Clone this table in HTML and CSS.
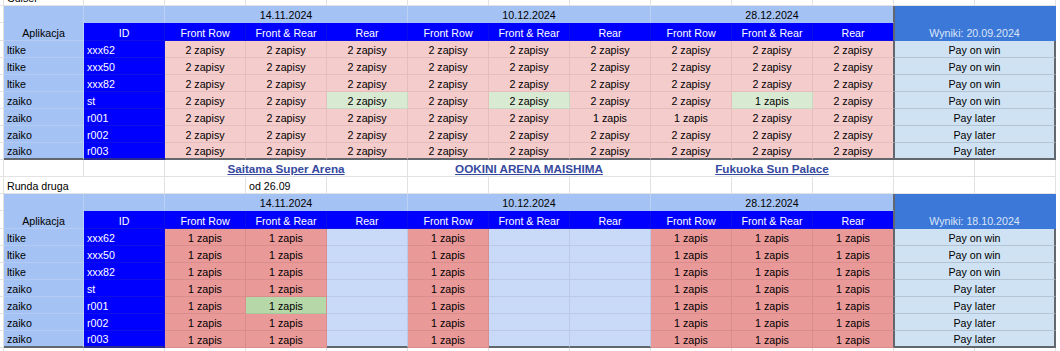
FILE: index.html
```html
<!DOCTYPE html>
<html lang="pl">
<head>
<meta charset="utf-8">
<title>Arkusz</title>
<link rel="stylesheet" href="styles.css">
</head>
<body>
<div class="sheet">
  <!-- row 0 -->
  <div class="c z"></div><div class="c l">Cuisel</div><div class="c"></div><div class="c"></div><div class="c"></div><div class="c"></div><div class="c"></div><div class="c"></div><div class="c"></div><div class="c"></div><div class="c"></div><div class="c"></div><div class="c"></div><div class="c"></div>

  <!-- table 1 header -->
  <div class="c z"></div><div class="c app r2">Aplikacja</div><div class="c hl"></div><div class="c hl s3">14.11.2024</div><div class="c hl s3">10.12.2024</div><div class="c hl s3 kr">28.12.2024</div><div class="c wy s2 r2">Wyniki: 20.09.2024</div>
  <div class="c z"></div><div class="c hb">ID</div><div class="c hb">Front Row</div><div class="c hb">Front &amp; Rear</div><div class="c hb">Rear</div><div class="c hb">Front Row</div><div class="c hb">Front &amp; Rear</div><div class="c hb">Rear</div><div class="c hb">Front Row</div><div class="c hb">Front &amp; Rear</div><div class="c hb kr">Rear</div>

  <!-- table 1 data -->
  <div class="c z"></div><div class="c l app">ltike</div><div class="c l idc">xxx62</div><div class="c pk">2 zapisy</div><div class="c pk">2 zapisy</div><div class="c pk">2 zapisy</div><div class="c pk">2 zapisy</div><div class="c pk">2 zapisy</div><div class="c pk">2 zapisy</div><div class="c pk">2 zapisy</div><div class="c pk">2 zapisy</div><div class="c pk kr">2 zapisy</div><div class="c res s2">Pay on win</div>
  <div class="c z"></div><div class="c l app">ltike</div><div class="c l idc">xxx50</div><div class="c pk">2 zapisy</div><div class="c pk">2 zapisy</div><div class="c pk">2 zapisy</div><div class="c pk">2 zapisy</div><div class="c pk">2 zapisy</div><div class="c pk">2 zapisy</div><div class="c pk">2 zapisy</div><div class="c pk">2 zapisy</div><div class="c pk kr">2 zapisy</div><div class="c res s2">Pay on win</div>
  <div class="c z"></div><div class="c l app">ltike</div><div class="c l idc">xxx82</div><div class="c pk">2 zapisy</div><div class="c pk">2 zapisy</div><div class="c pk">2 zapisy</div><div class="c pk">2 zapisy</div><div class="c pk">2 zapisy</div><div class="c pk">2 zapisy</div><div class="c pk">2 zapisy</div><div class="c pk">2 zapisy</div><div class="c pk kr">2 zapisy</div><div class="c res s2">Pay on win</div>
  <div class="c z"></div><div class="c l app">zaiko</div><div class="c l idc">st</div><div class="c pk">2 zapisy</div><div class="c pk">2 zapisy</div><div class="c gr">2 zapisy</div><div class="c pk">2 zapisy</div><div class="c gr">2 zapisy</div><div class="c pk">2 zapisy</div><div class="c pk">2 zapisy</div><div class="c gr">1 zapis</div><div class="c pk kr">2 zapisy</div><div class="c res s2">Pay on win</div>
  <div class="c z"></div><div class="c l app">zaiko</div><div class="c l idc">r001</div><div class="c pk">2 zapisy</div><div class="c pk">2 zapisy</div><div class="c pk">2 zapisy</div><div class="c pk">2 zapisy</div><div class="c pk">2 zapisy</div><div class="c pk">1 zapis</div><div class="c pk">1 zapis</div><div class="c pk">2 zapisy</div><div class="c pk kr">2 zapisy</div><div class="c res s2">Pay later</div>
  <div class="c z"></div><div class="c l app">zaiko</div><div class="c l idc">r002</div><div class="c pk">2 zapisy</div><div class="c pk">2 zapisy</div><div class="c pk">2 zapisy</div><div class="c pk">2 zapisy</div><div class="c pk">2 zapisy</div><div class="c pk">2 zapisy</div><div class="c pk">2 zapisy</div><div class="c pk">2 zapisy</div><div class="c pk kr">2 zapisy</div><div class="c res s2">Pay later</div>
  <div class="c z"></div><div class="c l app bt">zaiko</div><div class="c l idc bt">r003</div><div class="c pk bt">2 zapisy</div><div class="c pk bt">2 zapisy</div><div class="c pk bt">2 zapisy</div><div class="c pk bt">2 zapisy</div><div class="c pk bt">2 zapisy</div><div class="c pk bt">2 zapisy</div><div class="c pk bt">2 zapisy</div><div class="c pk bt">2 zapisy</div><div class="c pk kr bt">2 zapisy</div><div class="c res s2 bt">Pay later</div>

  <!-- venues -->
  <div class="c z"></div><div class="c"></div><div class="c"></div><div class="c s3"><span class="lk">Saitama Super Arena</span></div><div class="c s3"><span class="lk">OOKINI ARENA MAISHIMA</span></div><div class="c s3"><span class="lk">Fukuoka Sun Palace</span></div><div class="c"></div><div class="c"></div>

  <!-- round two -->
  <div class="c z"></div><div class="c l s2">Runda druga</div><div class="c"></div><div class="c l">od 26.09</div><div class="c"></div><div class="c"></div><div class="c"></div><div class="c"></div><div class="c"></div><div class="c"></div><div class="c"></div><div class="c"></div><div class="c"></div>

  <!-- table 2 header -->
  <div class="c z"></div><div class="c app r2">Aplikacja</div><div class="c hl"></div><div class="c hl s3">14.11.2024</div><div class="c hl s3">10.12.2024</div><div class="c hl s3 kr">28.12.2024</div><div class="c wy s2 r2">Wyniki: 18.10.2024</div>
  <div class="c z"></div><div class="c hb">ID</div><div class="c hb">Front Row</div><div class="c hb">Front &amp; Rear</div><div class="c hb">Rear</div><div class="c hb">Front Row</div><div class="c hb">Front &amp; Rear</div><div class="c hb">Rear</div><div class="c hb">Front Row</div><div class="c hb">Front &amp; Rear</div><div class="c hb kr">Rear</div>

  <!-- table 2 data -->
  <div class="c z"></div><div class="c l app">ltike</div><div class="c l idc">xxx62</div><div class="c rd">1 zapis</div><div class="c rd">1 zapis</div><div class="c em"></div><div class="c rd">1 zapis</div><div class="c em"></div><div class="c em"></div><div class="c rd">1 zapis</div><div class="c rd">1 zapis</div><div class="c rd kr">1 zapis</div><div class="c res s2">Pay on win</div>
  <div class="c z"></div><div class="c l app">ltike</div><div class="c l idc">xxx50</div><div class="c rd">1 zapis</div><div class="c rd">1 zapis</div><div class="c em"></div><div class="c rd">1 zapis</div><div class="c em"></div><div class="c em"></div><div class="c rd">1 zapis</div><div class="c rd">1 zapis</div><div class="c rd kr">1 zapis</div><div class="c res s2">Pay on win</div>
  <div class="c z"></div><div class="c l app">ltike</div><div class="c l idc">xxx82</div><div class="c rd">1 zapis</div><div class="c rd">1 zapis</div><div class="c em"></div><div class="c rd">1 zapis</div><div class="c em"></div><div class="c em"></div><div class="c rd">1 zapis</div><div class="c rd">1 zapis</div><div class="c rd kr">1 zapis</div><div class="c res s2">Pay on win</div>
  <div class="c z"></div><div class="c l app">zaiko</div><div class="c l idc">st</div><div class="c rd">1 zapis</div><div class="c rd">1 zapis</div><div class="c em"></div><div class="c rd">1 zapis</div><div class="c em"></div><div class="c em"></div><div class="c rd">1 zapis</div><div class="c rd">1 zapis</div><div class="c rd kr">1 zapis</div><div class="c res s2">Pay later</div>
  <div class="c z"></div><div class="c l app">zaiko</div><div class="c l idc">r001</div><div class="c rd">1 zapis</div><div class="c gr2">1 zapis</div><div class="c em"></div><div class="c rd">1 zapis</div><div class="c em"></div><div class="c em"></div><div class="c rd">1 zapis</div><div class="c rd">1 zapis</div><div class="c rd kr">1 zapis</div><div class="c res s2">Pay later</div>
  <div class="c z"></div><div class="c l app">zaiko</div><div class="c l idc">r002</div><div class="c rd">1 zapis</div><div class="c rd">1 zapis</div><div class="c em"></div><div class="c rd">1 zapis</div><div class="c em"></div><div class="c em"></div><div class="c rd">1 zapis</div><div class="c rd">1 zapis</div><div class="c rd kr">1 zapis</div><div class="c res s2">Pay later</div>
  <div class="c z"></div><div class="c l app bt">zaiko</div><div class="c l idc bt">r003</div><div class="c rd">1 zapis</div><div class="c rd">1 zapis</div><div class="c em bt"></div><div class="c rd">1 zapis</div><div class="c em bt"></div><div class="c em bt"></div><div class="c rd">1 zapis</div><div class="c rd">1 zapis</div><div class="c rd kr">1 zapis</div><div class="c res s2 bt">Pay later</div>

  <!-- trailing empty row -->
  <div class="c z"></div><div class="c"></div><div class="c"></div><div class="c"></div><div class="c"></div><div class="c"></div><div class="c"></div><div class="c"></div><div class="c"></div><div class="c"></div><div class="c"></div><div class="c"></div><div class="c"></div><div class="c"></div>
</div>
</body>
</html>
```

FILE: styles.css
```css
html, body {
  margin: 0;
  padding: 0;
  background: #ffffff;
}

body {
  font-family: "Liberation Sans", Arial, sans-serif;
  font-size: 10.67px;
  color: #000000;
  overflow: hidden;
}

.sheet {
  display: grid;
  grid-template-columns: 4px 80px repeat(12, 81px);
  grid-template-rows:
    6px 17px 18px repeat(7, 17px)
    17px 17px
    17px 18px repeat(7, 17px)
    17px;
}

.c {
  box-sizing: border-box;
  min-width: 0;
  display: flex;
  align-items: flex-end;
  justify-content: center;
  padding: 0 3px;
  line-height: 14px;
  white-space: nowrap;
  overflow: hidden;
  background: #ffffff;
  border-right: 1px solid #e2e2e2;
  border-bottom: 1px solid #e2e2e2;
}

.c.l { justify-content: flex-start; }
.c.z { padding: 0; }

.s2 { grid-column: span 2; }
.s3 { grid-column: span 3; }
.r2 { grid-row: span 2; }

/* application column */
.app {
  background: #a4c2f4;
  border-right-color: #b9cff5;
  border-bottom-color: #b4cbf3;
}

/* light header row */
.hl {
  background: #a4c2f4;
  border-right-color: #bcd1f5;
  border-bottom-color: #a4c2f4;
}

/* blue id column and blue header row */
.idc, .hb {
  background: #0000ff;
  color: #ffffff;
  border-right-color: #0d0de8;
  border-bottom-color: #1010e6;
}

/* first round cells */
.pk {
  background: #f4cccc;
  border-right-color: #e4bdbd;
  border-bottom-color: #e4bdbd;
}

.gr {
  background: #d9ead3;
  border-right-color: #c7d9c1;
  border-bottom-color: #c7d9c1;
}

/* second round cells */
.rd {
  background: #ea9999;
  border-right-color: #d98d8d;
  border-bottom-color: #d98d8d;
}

.gr2 {
  background: #b6d7a8;
  border-right-color: #d98d8d;
  border-bottom-color: #a7c79a;
}

.em {
  background: #c9daf8;
  border-right-color: #b9c9e6;
  border-bottom-color: #b9c9e6;
}

/* results column */
.res {
  background: #cfe2f3;
  border-left: 1px solid #62676e;
  border-right: 2px solid #62676e;
  border-bottom-color: #b5c4d2;
}

.wy {
  background: #3c78d8;
  color: #dbe5f7;
  border-left: 1px solid #62676e;
  border-right: 2px solid #3c78d8;
  border-bottom-color: #3c78d8;
}

.kr { border-right-color: #62676e; }

.bt { border-bottom: 2px solid #62676e; }
.idc.bt { border-bottom-color: #2a2a8c; }

.lk {
  font-size: 11.7px;
  font-weight: bold;
  color: #36499e;
  text-decoration: underline;
}
```
